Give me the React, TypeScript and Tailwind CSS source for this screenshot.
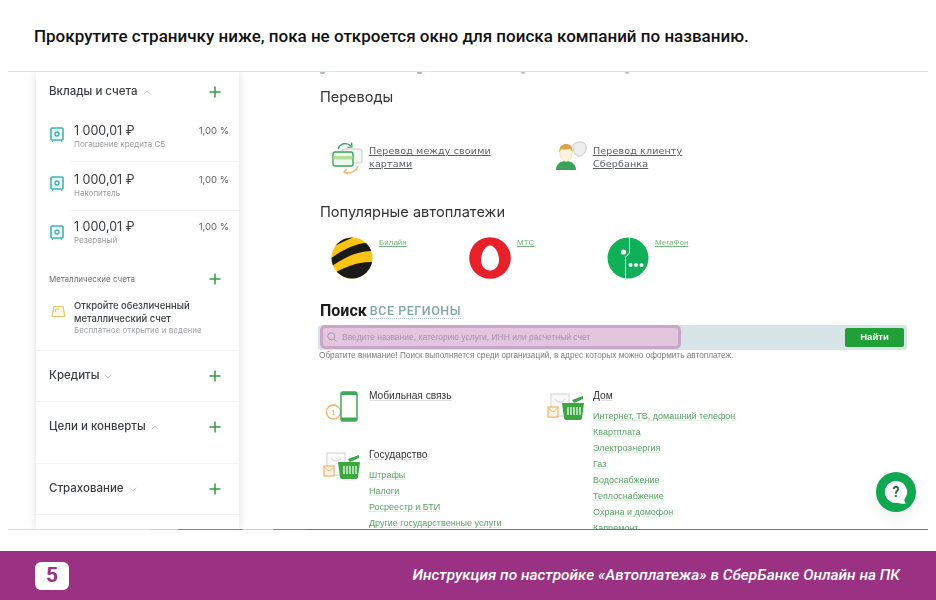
import React from "react";

const Plus = () => (
  <svg width="12" height="12" viewBox="0 0 12 12" className="shrink-0">
    <path d="M6 .5v11M.5 6h11" stroke="#2f9e44" strokeWidth="1.5" />
  </svg>
);
const Chevron = ({ up }: { up?: boolean }) => (
  <svg width="8" height="5" viewBox="0 0 8 5" className="shrink-0 ml-[5px] mt-[1px]">
    <path d={up ? "M.7 4.2 4 1l3.3 3.2" : "M.7.8 4 4l3.3-3.2"} fill="none" stroke="#c9cdd0" strokeWidth="1" />
  </svg>
);
const Safe = () => (
  <svg width="14" height="16" viewBox="0 0 14 16" className="shrink-0">
    <rect x="1" y="1" width="12" height="12" rx="1" fill="#eef9f9" stroke="#3db6bb" strokeWidth="1.6" />
    <circle cx="7" cy="7" r="2" fill="none" stroke="#3db6bb" strokeWidth="1.4" />
    <path d="M2.5 13.5v1.5M11.5 13.5v1.5" stroke="#3db6bb" strokeWidth="1.2" />
  </svg>
);
const Deposit = ({ sub, top, icon, h, border }: { sub: string; top: string; icon: string; h: string; border?: boolean }) => (
  <div className={`flex ${h}`}>
    <div className={`w-[35px] pl-[14px] shrink-0 ${icon}`}>
      <Safe />
    </div>
    <div className={`flex-1 flex justify-between pr-[10px] pl-[3px] ${top} ${border ? "border-b border-[#efefef]" : ""}`}>
      <div className="flex flex-col">
        <span className="text-[12.5px] leading-[16px] text-[#3a3d40]">1 000,01 ₽</span>
        <span className="text-[8px] leading-[11px] text-[#9a9da0]">{sub}</span>
      </div>
      <span className="text-[9.5px] leading-[16px] text-[#5b5e62]">1,00 %</span>
    </div>
  </div>
);
const Section = ({ title, up, h }: { title: string; up?: boolean; h: string }) => (
  <div className={`${h} pl-[13px] pr-[18px] pt-[16px] border-b border-[#f1f1f1] flex items-start`}>
    <div className="flex items-center flex-1 h-[18px]">
      <span className="text-[11.5px] font-medium text-[#3a3d40]">{title}</span>
      <Chevron up={up} />
    </div>
    <div className="h-[18px] flex items-center"><Plus /></div>
  </div>
);
const Sidebar = () => (
  <aside className="w-[203px] h-full ml-[28px] bg-white shrink-0 shadow-[0_0_10px_rgba(0,0,0,0.13)] font-['Inter',sans-serif]">
    <div className="h-[38px] pl-[13px] pr-[18px] pt-[11px] flex items-start">
      <div className="flex items-center flex-1 h-[18px]">
        <span className="text-[11.5px] font-medium text-[#3a3d40]">Вклады и счета</span>
        <Chevron up />
      </div>
      <div className="h-[18px] flex items-center"><Plus /></div>
    </div>
    <Deposit sub="Погашение кредита СБ" top="pt-[13px]" icon="pt-[17px]" h="h-[52px]" border />
    <Deposit sub="Накопитель" top="pt-[10px]" icon="pt-[14px]" h="h-[49px]" border />
    <Deposit sub="Резервный" top="pt-[8px]" icon="pt-[14px]" h="h-[51px]" />
    <div className="h-[34px] pl-[13px] pr-[18px] flex items-center justify-between">
      <span className="text-[8px] text-[#6d7073]">Металлические счета</span>
      <Plus />
    </div>
    <div className="h-[55px] flex border-b border-[#f1f1f1]">
      <div className="w-[38px] pl-[15px] pt-[9px] shrink-0">
        <svg width="15" height="13" viewBox="0 0 15 13">
          <path d="M3 1.5h9l2 10H1z" fill="#fdf8e6" stroke="#e3c874" strokeWidth="1.2" />
          <path d="M4.5 7V4h4" fill="none" stroke="#e3c874" strokeWidth="1" />
        </svg>
      </div>
      <div className="flex flex-col pt-[4px]">
        <span className="text-[9.5px] leading-[12.5px] font-medium text-[#3f4245]">Откройте обезличенный</span>
        <span className="text-[9.5px] leading-[12.5px] font-medium text-[#3f4245]">металлический счет</span>
        <span className="text-[8px] leading-[11px] text-[#a0a3a6]">Бесплатное открытие и ведение</span>
      </div>
    </div>
    <Section title="Кредиты" h="h-[51px]" />
    <Section title="Цели и конверты" up h="h-[62px]" />
    <Section title="Страхование" h="h-[51px]" />
  </aside>
);

const CardsIcon = () => (
  <svg width="32" height="34" viewBox="0 0 32 34" className="shrink-0">
    <rect x="10" y="8" width="20" height="14" rx="2" fill="#f7f7f7" stroke="#c9c9c9" />
    <path d="M6 8C8 2 15 1 19 5" fill="none" stroke="#3aa35a" strokeWidth="1.3" />
    <path d="M19.5 1.5 20 6l-4.5.3" fill="none" stroke="#3aa35a" strokeWidth="1.3" />
    <rect x="1" y="11" width="20" height="14" rx="2" fill="#eef8ee" stroke="#3aa35a" strokeWidth="1.4" />
    <rect x="1.5" y="15" width="19" height="3.5" fill="#b8dd9a" />
    <path d="M26 25c-2 6-8 8-13 6" fill="none" stroke="#f2b26b" strokeWidth="1.3" />
    <path d="M15 28l-3 3 4 2" fill="none" stroke="#f2b26b" strokeWidth="1.3" />
  </svg>
);
const PersonIcon = () => (
  <svg width="32" height="30" viewBox="0 0 32 30" className="shrink-0">
    <path d="M19 3c4-3 11-3 12 2 1 5-3 11-8 10-4-1-6-9-4-12z" fill="#eee" stroke="#c9c9c9" />
    <path d="M15 5l5-2v6z" fill="#e4e4e4" />
    <path d="M1 29c0-6 4-8 8-9h4c4 1 8 3 8 9z" fill="#3aa35a" />
    <ellipse cx="11" cy="13" rx="6" ry="7.5" fill="#fdf3da" stroke="#e6d6a8" strokeWidth=".5" />
    <path d="M4.5 12C3.500 5 8 3 11 3c4 0 7 2 6.500 9-1-3-2-4-3-4.500-2 1.500-6 1.500-8 .5-1 1-1.500 2-2 4z" fill="#d6a546" />
  </svg>
);
const Beeline = () => (
  <svg width="42" height="42" viewBox="0 0 42 42" className="shrink-0">
    <defs>
      <clipPath id="bee"><circle cx="21" cy="21" r="20.500" /></clipPath>
    </defs>
    <circle cx="21" cy="21" r="20.500" fill="#f9c414" />
    <g clipPath="url(#bee)">
      <path d="M4 9C11 5 18 2 26-1L13-1 3 5z" fill="#1a1a1a" />
      <path d="M-1 22C8 15 24 6 36 6l6 8C28 13 12 21 0 30z" fill="#1a1a1a" />
      <path d="M3 36C14 30 28 24 42 25l-2 10C32 44 12 46 3 36z" fill="#1a1a1a" />
    </g>
  </svg>
);
const Mts = () => (
  <svg width="42" height="42" viewBox="0 0 42 42" className="shrink-0">
    <circle cx="21" cy="21" r="20.800" fill="#e8202a" />
    <path d="M21 8.500c5 0 9 8 9 14.500 0 6-4 10.500-9 10.500S12 29 12 23c0-6.500 4-14.500 9-14.500z" fill="#fff" />
  </svg>
);
const Megafon = () => (
  <svg width="42" height="42" viewBox="0 0 42 42" className="shrink-0">
    <circle cx="21" cy="21" r="20.500" fill="#10b058" />
    <path d="M22.500 0v16l-4 4v22" fill="none" stroke="#fff" strokeWidth="1" />
    <circle cx="16.500" cy="15" r="2.600" fill="#fff" />
    <circle cx="23.500" cy="28" r="2" fill="#fff" />
    <circle cx="29" cy="28" r="2" fill="#fff" />
    <circle cx="34.500" cy="28" r="2" fill="#fff" />
  </svg>
);
const Operator = ({ logo, name, w }: { logo: React.ReactNode; name: string; w: string }) => (
  <div className={`flex ${w}`}>
    {logo}
    <a className="ml-[6px] mt-[1px] text-[8px] leading-[10px] text-[#76b47e] underline font-['Liberation_Sans',sans-serif]">{name}</a>
  </div>
);
const PhoneIcon = () => (
  <svg width="34" height="31" viewBox="0 0 34 31" className="shrink-0">
    <circle cx="8.500" cy="21" r="7" fill="#fff" stroke="#f2b26b" strokeWidth="1.300" />
    <text x="8.500" y="24" textAnchor="middle" fontSize="8" fill="#e9a557" fontFamily="Liberation Sans">1</text>
    <rect x="16" y="1" width="16" height="29" rx="2" fill="#fff" stroke="#42a85a" strokeWidth="1.500" />
    <rect x="16" y="1" width="16" height="3" fill="#42a85a" />
    <rect x="16" y="26.500" width="16" height="3.500" fill="#42a85a" />
  </svg>
);
const BasketIcon = () => (
  <svg width="38" height="29" viewBox="0 0 38 29" className="shrink-0">
    <rect x="4" y="1" width="18" height="22" fill="#fafafa" stroke="#d2d2d2" />
    <path d="M8 6c2 4 8 4 10 0" fill="none" stroke="#d2d2d2" />
    <rect x="1" y="14" width="10" height="10" fill="#fff6e8" stroke="#f2b26b" strokeWidth="1.200" />
    <path d="M1 15l5 4 5-4" fill="none" stroke="#f2b26b" />
    <path d="M25 7l11-4v3l-9 4z" fill="#3aa83f" />
    <path d="M15 10h22l-2 15c0 1-1 2-2 2H19c-1 0-2-1-2-2z" fill="#3aa83f" />
    <path d="M21 14v8M24 14v8M27 14v8M30 14v8M33 14v8" stroke="#fff" strokeWidth="1.200" />
  </svg>
);
const Links = ({ items }: { items: string[] }) => (
  <div className="flex flex-col mt-[6px]">
    {items.map((t) => (
      <a key={t} className="h-[16px] text-[9px] leading-[16px] text-[#58a264] whitespace-nowrap underline decoration-[#e0efe2]">{t}</a>
    ))}
  </div>
);
const Dots = () => (
  <div className="flex h-[2px]">
    <span className="w-[5px] h-[2px] rounded-b-full bg-[#8ccb94]" />
    <span className="ml-[92px] w-[5px] h-[2px] rounded-b-full bg-[#8ccb94]" />
    <span className="ml-[99px] w-[4px] h-[2px] rounded-b-full bg-[#b9b9b9]" />
    <span className="ml-[100px] w-[4px] h-[2px] rounded-b-full bg-[#b9b9b9]" />
  </div>
);
const MainArea = () => (
  <main className="flex-1 ml-[79px] font-['Liberation_Sans',sans-serif] min-w-0">
    <div className="ml-[2px]"><Dots /></div>
    <h2 className="ml-[2px] mt-[14px] h-[18px] leading-[18px] text-[14.5px] text-[#333] font-['Inter',sans-serif]">Переводы</h2>
    <div className="flex mt-[35px] h-[34px] ml-[14px]">
      <div className="flex w-[223px]">
        <CardsIcon />
        <a className="ml-[5px] mt-[3px] text-[9.5px] leading-[13px] tracking-[0.15px] text-[#5c5f62] underline font-['DejaVu_Sans',sans-serif]">Перевод между своими<br />картами</a>
      </div>
      <div className="flex">
        <PersonIcon />
        <a className="ml-[6px] mt-[3px] text-[9.5px] leading-[13px] tracking-[0.15px] text-[#5c5f62] underline font-['DejaVu_Sans',sans-serif]">Перевод клиенту<br />Сбербанка</a>
      </div>
    </div>
    <h2 className="ml-[2px] mt-[27px] h-[20px] leading-[20px] text-[14.6px] text-[#333] font-['Inter',sans-serif]">Популярные автоплатежи</h2>
    <div className="flex mt-[15px] h-[42px] ml-[13px]">
      <Operator logo={<Beeline />} name="Билайн" w="w-[138px]" />
      <Operator logo={<Mts />} name="МТС" w="w-[138px]" />
      <Operator logo={<Megafon />} name="МегаФон" w="w-[120px]" />
    </div>
    <div className="ml-[2px] mt-[21px] h-[22px] flex items-center gap-[3px] font-['Roboto',sans-serif]">
      <span className="text-[16px] font-bold text-[#1c1c1c]">Поиск</span>
      <span className="text-[12.5px] font-medium tracking-[0.55px] text-[#7fa9a7] border-b border-dotted border-[#b9cfcf] leading-[14px] mt-[1px]">ВСЕ РЕГИОНЫ</span>
    </div>
    <div className="mt-[3px] h-[25px] w-[589px] bg-[#d7e5e8] rounded-[3px] flex items-center justify-between pl-[2px] pr-[3px]">
      <div className="w-[361px] h-[24px] self-start rounded-[5px] border-[3px] border-[#c9a6c8] bg-[#e3c5dd] flex items-center pl-[4px] gap-[5px]">
        <svg width="10" height="10" viewBox="0 0 10 10" className="shrink-0">
          <circle cx="4.300" cy="4.300" r="3.500" fill="none" stroke="#a99aae" />
          <path d="M7 7l2.500 2.500" stroke="#a99aae" />
        </svg>
        <span className="text-[8.5px] text-[#a591ab] whitespace-nowrap">Введите название, категорию услуги, ИНН или расчетный счет</span>
      </div>
      <button className="w-[59px] h-[19px] bg-[#22a038] rounded-[2px] text-white text-[9.5px] font-bold">Найти</button>
    </div>
    <p className="ml-[1px] mt-[1px] h-[10px] leading-[10px] text-[8.22px] text-[#7d7d7d] whitespace-nowrap">Обратите внимание! Поиск выполняется среди организаций, в адрес которых можно оформить автоплатеж.</p>
    <div className="flex mt-[25px] ml-[7px]">
      <div className="w-[222px] flex flex-col">
        <div className="flex h-[60px]">
          <div className="w-[44px] shrink-0 pt-[5px]"><PhoneIcon /></div>
          <span className="text-[10.2px] leading-[12px] h-[12px] text-[#333] mt-[4px] underline decoration-[#e0e0e0]">Мобильная связь</span>
        </div>
        <div className="flex">
          <div className="w-[44px] shrink-0 -ml-[2px] mr-[2px] pt-[6px]"><BasketIcon /></div>
          <div className="flex flex-col">
            <span className="text-[10.2px] leading-[12px] text-[#333] mt-[3px] underline decoration-[#e0e0e0]">Государство</span>
            <Links items={["Штрафы", "Налоги", "Росреестр и БТИ", "Другие государственные услуги"]} />
          </div>
        </div>
      </div>
      <div className="flex">
        <div className="w-[46px] shrink-0 pt-[7px]"><BasketIcon /></div>
        <div className="flex flex-col">
          <span className="text-[10.2px] leading-[12px] text-[#333] mt-[4px] underline decoration-[#e0e0e0]">Дом</span>
          <Links items={["Интернет, ТВ, домашний телефон", "Квартплата", "Электроэнергия", "Газ", "Водоснабжение", "Теплоснабжение", "Охрана и домофон", "Капремонт"]} />
        </div>
      </div>
    </div>
  </main>
);

export default function App() {
  return (
    <div className="relative w-[936px] h-[600px] bg-white overflow-hidden flex flex-col font-['Roboto',sans-serif]">
      <header className="h-[71px] pl-[34px] pt-[3px] flex items-center shrink-0">
        <h1 className="text-[17px] font-medium text-[#111] whitespace-nowrap">Прокрутите страничку ниже, пока не откроется окно для поиска компаний по названию.</h1>
      </header>
      <div className="mx-[8px] h-px bg-[#e3e3e3] shrink-0" />
      <section className="mx-[8px] h-[457px] shrink-0 flex overflow-hidden blur-[0.3px]">
        <Sidebar />
        <MainArea />
      </section>
      <div className="mx-[8px] h-px shrink-0 flex">
        <span className="w-[142px] bg-[#dcdcdc]" />
        <span className="w-[28px] bg-[#e7c9a8]" />
        <span className="w-[65px] bg-[#8c8494]" />
        <span className="w-[30px] bg-[#e7c9a8]" />
        <span className="w-[33px] bg-[#8c8494]" />
        <span className="flex-1 bg-[#77727a]" />
      </div>
      <div className="h-[21px] shrink-0" />
      <footer className="flex-1 bg-[#9a3182] flex items-center justify-between pl-[35px] pr-[36px]">
        <div className="w-[34px] h-[28px] rounded-[6px] bg-white flex items-center justify-center text-[#9a3182] text-[21px] font-bold">5</div>
        <span className="text-white italic font-medium text-[15.4px] whitespace-nowrap">Инструкция по настройке «Автоплатежа» в СберБанке Онлайн на ПК</span>
      </footer>
      <button className="absolute left-[876px] top-[472px] w-[40px] h-[40px] rounded-full bg-[#0fa750] flex items-center justify-center shadow-[0_6px_14px_rgba(60,60,120,0.08)]">
        <svg width="25" height="25" viewBox="0 0 25 25">
          <path d="M12 1a11 11 0 1 0 2 21.800c2 .9 5 1.200 8 .7-1.500-1.500-1.800-3-1.500-4.500A11 11 0 0 0 12 1z" fill="#fff" />
          <text x="12" y="17" textAnchor="middle" fontSize="14" fontWeight="700" fill="#2a6a4a" fontFamily="Roboto">?</text>
        </svg>
      </button>
    </div>
  );
}
